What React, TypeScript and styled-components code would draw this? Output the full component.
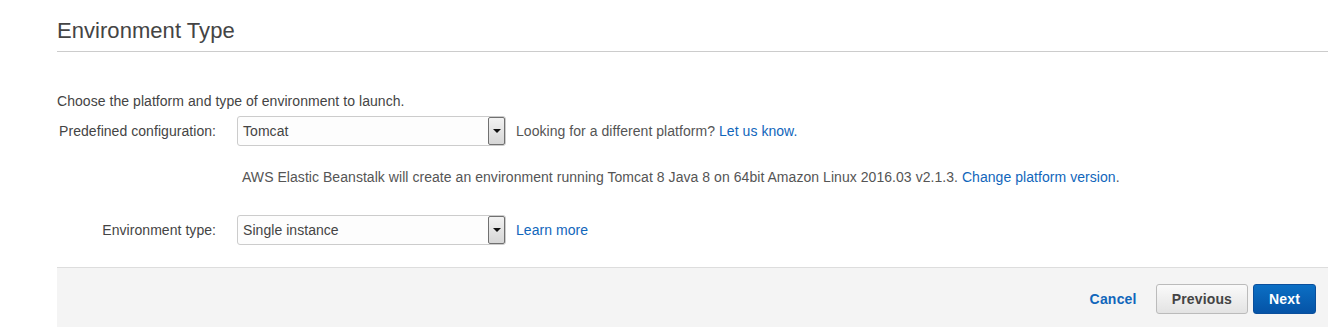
import styled, { createGlobalStyle } from 'styled-components';

const GlobalStyle = createGlobalStyle`
    html, body {
        margin: 0;
        padding: 0;
        background: #fff;
    }
    body {
        font-family: 'Liberation Sans', Arial, sans-serif;
        font-size: 14px;
        letter-spacing: 0.05px;
        color: #444;
    }
`;

const Page = styled.div`
    width: 1328px;
    height: 335px;
    padding-left: 57px;
    box-sizing: border-box;
    overflow: hidden;
`;

const Htitle = styled.h2`
    margin: 0;
    padding: 19px 0 8px;
    font-size: 22px;
    font-weight: normal;
    line-height: 24px;
    color: #444;
    border-bottom: 1px solid #ccc;
`;

const Body = styled.div`
    padding-top: 40px;
`;

const Intro = styled.p`
    margin: 0 0 6px;
    line-height: 18px;
`;

const Row = styled.div<{ mt?: string }>`
    display: flex;
    align-items: center;
    margin-top: ${(props) => props.mt || '0'};
`;

const Label = styled.label`
    width: 159px;
    margin-right: 21px;
    text-align: right;
    color: #444;
`;

const Select = styled.div`
    position: relative;
    width: 269px;
    height: 30px;
    box-sizing: border-box;
    border: 1px solid #ccc;
    border-radius: 3px;
    background: #fdfdfd;
    display: flex;
    align-items: center;
    padding-left: 5px;
    color: #444;
`;

// windows style dropdown button on the right edge
const Arrow = styled.span`
    position: absolute;
    top: 0;
    right: 0;
    width: 17px;
    height: 28px;
    box-sizing: border-box;
    border: 1px solid #707070;
    border-radius: 2px;
    background: linear-gradient(#f2f2f2, #d6d6d6);
    display: flex;
    align-items: center;
    justify-content: center;
    &::after {
        content: '';
        border-left: 4px solid transparent;
        border-right: 4px solid transparent;
        border-top: 4px solid #111;
    }
`;

const Note = styled.span`
    margin-left: 10px;
    color: #555;
`;

const Link = styled.a`
    color: #1166bb;
    text-decoration: none;
    cursor: pointer;
`;

const Info = styled.p`
    margin: 22px 0 0 185px;
    line-height: 18px;
    color: #555;
`;

const Footer = styled.div`
    margin-top: 22px;
    height: 60px;
    box-sizing: border-box;
    border-top: 1px solid #ddd;
    background: #f4f4f4;
    display: flex;
    align-items: center;
    justify-content: flex-end;
    padding: 3px 12px 0 0;
`;

const Cancel = styled(Link)`
    font-weight: bold;
    font-size: 14px;
    letter-spacing: 0.2px;
    margin-right: 19px;
`;

const Button = styled.button<{ primary?: boolean }>`
    height: 30px;
    box-sizing: border-box;
    padding: 0 15px;
    font-family: 'Liberation Sans', Arial, sans-serif;
    font-size: 14px;
    font-weight: bold;
    letter-spacing: 0.15px;
    border-radius: 3px;
    cursor: pointer;
    color: ${(props) => (props.primary ? '#fff' : '#444')};
    border: 1px solid ${(props) => (props.primary ? '#0a4f9c' : '#bbb')};
    background: ${(props) =>
        props.primary ? 'linear-gradient(#0b6fc4, #0553a6)' : 'linear-gradient(#fafafa, #e3e3e3)'};
    & + & {
        margin-left: 5px;
    }
`;

export default function App() {
    return (
        <>
            <GlobalStyle />
            <Page>
                <Htitle>Environment Type</Htitle>
                <Body>
                    <Intro>Choose the platform and type of environment to launch.</Intro>
                    <Row>
                        <Label>Predefined configuration:</Label>
                        <Select>
                            Tomcat
                            <Arrow />
                        </Select>
                        <Note>
                            Looking for a different platform? <Link>Let us know.</Link>
                        </Note>
                    </Row>
                    <Info>
                        AWS Elastic Beanstalk will create an environment running Tomcat 8 Java 8 on 64bit Amazon
                        Linux 2016.03 v2.1.3. <Link>Change platform version</Link>.
                    </Info>
                    <Row mt="29px">
                        <Label>Environment type:</Label>
                        <Select>
                            Single instance
                            <Arrow />
                        </Select>
                        <Note>
                            <Link>Learn more</Link>
                        </Note>
                    </Row>
                </Body>
                <Footer>
                    <Cancel>Cancel</Cancel>
                    <Button>Previous</Button>
                    <Button primary>Next</Button>
                </Footer>
            </Page>
        </>
    );
}
